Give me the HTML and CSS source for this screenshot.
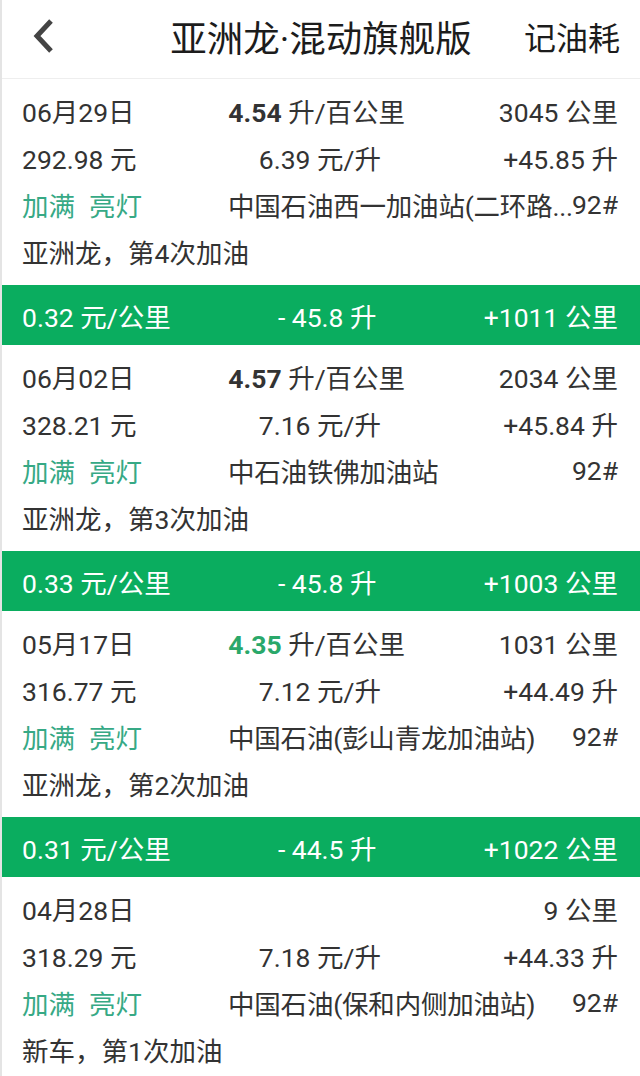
FILE: index.html
```html
<!DOCTYPE html>
<html lang="zh-CN">
  <head>
    <meta charset="UTF-8" />
    <title>亚洲龙·混动旗舰版</title>
    <link rel="stylesheet" href="styles.css">
  </head>
  <body>
    <div class="header">
      <div class="back">
        <svg width="24" height="36" viewBox="0 0 24 36">
          <path d="M19 3 L5 18 L19 33" fill="none" stroke="#444" stroke-width="5" stroke-linejoin="miter" />
        </svg>
      </div>
      <div class="title">亚洲龙·混动旗舰版</div>
      <div class="action">记油耗</div>
    </div>

    <div class="record">
      <div class="row">
        <span>06月29日</span>
        <span><b>4.54</b> 升/百公里</span>
        <span>3045 公里</span>
      </div>
      <div class="row">
        <span>292.98 元</span>
        <span>6.39 元/升</span>
        <span>+45.85 升</span>
      </div>
      <div class="row">
        <span class="tags"><i>加满</i><i>亮灯</i></span>
        <span class="station">中国石油西一加油站(二环路...</span>
        <span>92#</span>
      </div>
      <div class="row">
        <span>亚洲龙，第4次加油</span>
      </div>
    </div>
    <div class="bar">
      <span>0.32 元/公里</span>
      <span>- 45.8 升</span>
      <span>+1011 公里</span>
    </div>

    <div class="record">
      <div class="row">
        <span>06月02日</span>
        <span><b>4.57</b> 升/百公里</span>
        <span>2034 公里</span>
      </div>
      <div class="row">
        <span>328.21 元</span>
        <span>7.16 元/升</span>
        <span>+45.84 升</span>
      </div>
      <div class="row">
        <span class="tags"><i>加满</i><i>亮灯</i></span>
        <span class="station">中石油铁佛加油站</span>
        <span>92#</span>
      </div>
      <div class="row">
        <span>亚洲龙，第3次加油</span>
      </div>
    </div>
    <div class="bar">
      <span>0.33 元/公里</span>
      <span>- 45.8 升</span>
      <span>+1003 公里</span>
    </div>

    <div class="record">
      <div class="row">
        <span>05月17日</span>
        <span><b class="best">4.35</b> 升/百公里</span>
        <span>1031 公里</span>
      </div>
      <div class="row">
        <span>316.77 元</span>
        <span>7.12 元/升</span>
        <span>+44.49 升</span>
      </div>
      <div class="row">
        <span class="tags"><i>加满</i><i>亮灯</i></span>
        <span class="station">中国石油(彭山青龙加油站)</span>
        <span>92#</span>
      </div>
      <div class="row">
        <span>亚洲龙，第2次加油</span>
      </div>
    </div>
    <div class="bar">
      <span>0.31 元/公里</span>
      <span>- 44.5 升</span>
      <span>+1022 公里</span>
    </div>

    <div class="record">
      <div class="row">
        <span>04月28日</span>
        <span>9 公里</span>
      </div>
      <div class="row">
        <span>318.29 元</span>
        <span>7.18 元/升</span>
        <span>+44.33 升</span>
      </div>
      <div class="row">
        <span class="tags"><i>加满</i><i>亮灯</i></span>
        <span class="station">中国石油(保和内侧加油站)</span>
        <span>92#</span>
      </div>
      <div class="row">
        <span>新车，第1次加油</span>
      </div>
    </div>
  </body>
</html>
```

FILE: styles.css
```css
* {
  font-family: Roboto, "Noto Sans CJK SC", sans-serif;
  margin: 0;
  padding: 0;
  box-sizing: border-box;
}
body {
  background-color: #fff;
  border-left: 2px solid #e4e4e4;
  color: #333;
  font-size: 26.5px;
}
.header {
  height: 79px;
  border-bottom: 1px solid #eee;
  display: grid;
  grid-template-columns: 1fr auto 1fr;
  align-items: center;
  padding: 0 20px 6px 20px;
}
.back svg {
  display: block;
  margin-left: 10px;
}
.title {
  font-size: 36.5px;
  color: #1c1c1c;
}
.action {
  justify-self: end;
  font-size: 32px;
  color: #1c1c1c;
}
.record {
  padding: 8px 22px 10px 20px;
}
.row {
  display: flex;
  justify-content: space-between;
  align-items: center;
  height: 47px;
  white-space: nowrap;
}
.row b {
  font-weight: 700;
  color: #333;
}
.row b.best {
  color: #2aa86a;
}
.tags {
  width: 206px;
  flex: none;
}
.tags i {
  font-style: normal;
  color: #36a985;
  margin-right: 14px;
}
.station {
  flex: 1;
  min-width: 0;
  overflow: hidden;
  letter-spacing: -0.2px;
}
.bar {
  display: flex;
  justify-content: space-between;
  align-items: center;
  height: 60px;
  padding: 0 22px 0 20px;
  background-color: #0aad5f;
  color: #fff;
}
```
